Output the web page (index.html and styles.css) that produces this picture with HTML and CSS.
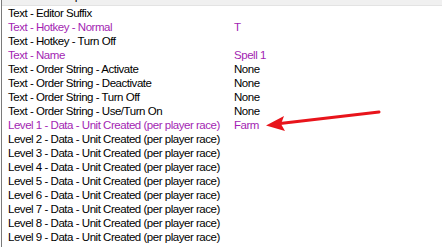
FILE: index.html
```html
<!DOCTYPE html>
<html>
<head>
<meta charset="utf-8">
<link rel="stylesheet" href="styles.css">
</head>
<body>
<div class="pane">
  <div class="list">
    <div class="row sel"><span class="name">Techtree - Requirements - Levels</span><span class="val"></span></div>
    <div class="row"><span class="name">Text - Editor Suffix</span><span class="val"></span></div>
    <div class="row mod"><span class="name">Text - Hotkey - Normal</span><span class="val">T</span></div>
    <div class="row"><span class="name">Text - Hotkey - Turn Off</span><span class="val"></span></div>
    <div class="row mod"><span class="name">Text - Name</span><span class="val">Spell 1</span></div>
    <div class="row"><span class="name">Text - Order String - Activate</span><span class="val">None</span></div>
    <div class="row"><span class="name">Text - Order String - Deactivate</span><span class="val">None</span></div>
    <div class="row"><span class="name">Text - Order String - Turn Off</span><span class="val">None</span></div>
    <div class="row"><span class="name">Text - Order String - Use/Turn On</span><span class="val">None</span></div>
    <div class="row mod"><span class="name">Level 1 - Data - Unit Created (per player race)</span><span class="val">Farm</span></div>
    <div class="row"><span class="name">Level 2 - Data - Unit Created (per player race)</span><span class="val"></span></div>
    <div class="row"><span class="name">Level 3 - Data - Unit Created (per player race)</span><span class="val"></span></div>
    <div class="row"><span class="name">Level 4 - Data - Unit Created (per player race)</span><span class="val"></span></div>
    <div class="row"><span class="name">Level 5 - Data - Unit Created (per player race)</span><span class="val"></span></div>
    <div class="row"><span class="name">Level 6 - Data - Unit Created (per player race)</span><span class="val"></span></div>
    <div class="row"><span class="name">Level 7 - Data - Unit Created (per player race)</span><span class="val"></span></div>
    <div class="row"><span class="name">Level 8 - Data - Unit Created (per player race)</span><span class="val"></span></div>
    <div class="row"><span class="name">Level 9 - Data - Unit Created (per player race)</span><span class="val"></span></div>
    <div class="row"><span class="name">Level 10 - Data - Unit Created (per player race)</span><span class="val"></span></div>
  </div>
  <svg class="arrow" width="442" height="247" viewBox="0 0 442 247">
    <line x1="379" y1="112" x2="280" y2="123.5" stroke="#e8141b" stroke-width="3" stroke-linecap="round"/>
    <polygon points="266,125.5 284,116 281,124 285,131" fill="#e8141b"/>
  </svg>
</div>
</body>
</html>
```

FILE: styles.css
```css
html, body {
  margin: 0;
  padding: 0;
  background: #ffffff;
}
.pane {
  position: relative;
  width: 441px;
  height: 247px;
  overflow: hidden;
  border-left: 1px solid #7a7a7a;
  margin-left: 1px;
  box-sizing: border-box;
}
.list {
  margin-top: -8px;
  display: flex;
  flex-direction: column;
}
.row {
  display: grid;
  grid-template-columns: 232px 1fr;
  height: 14px;
  line-height: 14px;
  font-family: "Liberation Sans", Arial, sans-serif;
  font-size: 11.5px;
  letter-spacing: -0.47px;
  color: #000000;
  white-space: nowrap;
}
.row .name {
  padding-left: 6px;
}
.row.sel {
  background: #f0f0f0;
  border-bottom: 1px solid #e3e3e3;
  height: 13px;
  line-height: 9px;
}
.row.mod {
  color: #a31fb3;
}
.arrow {
  position: absolute;
  left: -2px;
  top: 0;
}
```
